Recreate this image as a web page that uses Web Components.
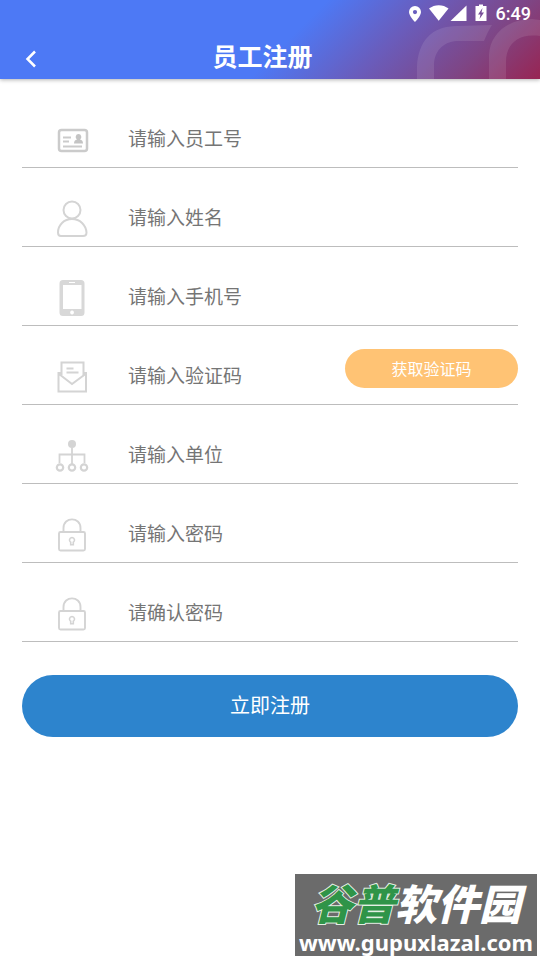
<!DOCTYPE html>
<html lang="zh-CN">
<head>
<meta charset="utf-8">
<meta name="viewport" content="width=device-width, initial-scale=1">
<title>员工注册</title>
<style>
html, body { margin: 0; min-height: 100%; }
body { background: #fff; font-family: "Liberation Sans", "Noto Sans CJK SC", sans-serif; }
</style>
</head>
<body>
<register-page></register-page>
<script>
const CJK = '"Noto Sans CJK SC", sans-serif';

class BaseElement extends HTMLElement {
  render(html) {
    this.attachShadow({ mode: 'open' }).innerHTML = html;
  }
}

customElements.define('status-bar', class extends BaseElement {
  connectedCallback() {
    this.render(`
      <style>
        :host { display: flex; justify-content: flex-end; align-items: center; height: 28px; padding-right: 9px; color: #fff; font: 500 18px/28px Roboto, sans-serif; }
        svg { display: block; width: 80px; height: 28px; margin-right: 7px; fill: #fff; }
      </style>
      <svg viewBox="0 0 80 28" aria-hidden="true">
        <path fill-rule="evenodd" d="M6 6a6 6 0 0 0-6 6c0 4 6 10 6 10s6-6 6-10a6 6 0 0 0-6-6zm0 4a2.100 2.100 0 1 1 0 4.200a2.100 2.100 0 0 1 0-4.200z"/>
        <path d="M20 8.500C25.500 4 34 4 39.500 8.500L29.700 20.800z"/>
        <path d="M57.500 5.500V21H41.500z"/>
        <path fill-rule="evenodd" d="M70 4.500h4v1.500h3.500v15h-11V6H70zM73.500 8l-4.500 6.500h2.500L70.500 19l4.500-6.500h-2.500z"/>
      </svg>
      <span>6:49</span>`);
  }
});

customElements.define('app-header', class extends BaseElement {
  connectedCallback() {
    this.render(`
      <style>
        :host { display: block; position: relative; overflow: hidden; color: #fff;
          background: linear-gradient(135deg, #4d79f5 0%, #4d79f5 53%, #6a5cbb 70%, #7f4584 86%, #982553 100%); }
        .art { position: absolute; right: 0; bottom: 0; width: 130px; height: 79px; fill: #fff; fill-opacity: .1; }
        .bar { position: relative; display: grid; grid-template-columns: 61px 1fr 76px; align-items: center; height: 49px; padding-top: 2px; }
        button { display: block; height: 40px; padding: 0 0 0 24px; border: 0; background: none; color: inherit; }
        button svg { display: block; width: 14px; height: 18px; margin-top: 8px; fill: none; stroke: #fff; stroke-width: 2.500; }
        h1 { margin: 0; font: 700 25px/36px ${CJK}; text-align: center; }
      </style>
      <svg class="art" viewBox="0 0 130 79" aria-hidden="true">
        <path d="M7 79V67C8 41 22 26 47 26L82 25Q78 31 74 41H47C32 42 24 52 24 66V79z"/>
        <path d="M79 79V55C80 33 99 19 122 19L130 20V36C108 33 96 44 96 62V79z"/>
      </svg>
      <status-bar></status-bar>
      <div class="bar">
        <button type="button" aria-label="返回"><svg viewBox="0 0 14 18"><path d="M11 1.500L3.500 9L11 16.500"/></svg></button>
        <h1><slot></slot></h1>
      </div>`);
  }
});

const ICONS = {
  card: `<g stroke="#cbcbcb"><rect x="5" y="10" width="28" height="21" rx="2.500" stroke-width="2.500"/><path stroke-width="2" d="M9 17.500h8M9 21.500h6M9 26.500h19"/><path fill="#c4c4c4" stroke="none" d="M24.500 14a3 3 0 0 1 1.500 5.500q3 .5 3 4h-9q0-3.500 3-4a3 3 0 0 1 1.500-5.500z"/></g>`,
  user: `<g stroke-width="2"><circle cx="18" cy="11" r="8.500"/><path d="M18 20C10 20 4 26 4 33.500Q4 37 7 37H29Q32.500 37 32.500 33.500C32 26 26 20 18 20z"/></g>`,
  phone: `<path fill="#d8d8d8" fill-rule="evenodd" stroke="none" d="M9 2H27Q30.500 2 30.500 5.500V34.500Q30.500 38 27 38H9Q5.500 38 5.500 34.500V5.500Q5.500 2 9 2zM9 7V31H27.500V7zM15 4v1h6V4zM18 32.600a1.900 1.900 0 1 0 .1 0z"/>`,
  mail: `<g stroke-width="2"><path d="M7.500 18V5.500H29.500V18M12.500 11.500h7M12.500 15.500h12"/><path d="M7 16H4.500V34.500H32V16H29.500M5 17L18 27L31.500 17"/></g>`,
  unit: `<circle cx="18" cy="8" r="4" fill="#d4d4d4" stroke="none"/><path stroke-width="1.800" d="M18 12V28M5.500 27V18.500H30.500V27"/><g stroke-width="2.200" fill="#fff"><circle cx="6" cy="31.500" r="3.200"/><circle cx="18" cy="31.500" r="3.200"/><circle cx="30" cy="31.500" r="3.200"/></g>`,
  lock: `<g stroke-width="1.900"><rect x="5" y="17" width="26" height="18.500" rx="1.500"/><path d="M9.500 17V13C9.500 1.500 26.500 1.500 26.500 13V17"/></g><path stroke-width="1.600" d="M18 22.500a2.600 2.600 0 0 1 1.300 4.800v2.500h-2.600v-2.500a2.600 2.600 0 0 1 1.300-4.800z"/>`
};

customElements.define('form-field', class extends BaseElement {
  connectedCallback() {
    const text = this.getAttribute('placeholder');
    this.render(`
      <style>
        :host { display: flex; align-items: center; box-sizing: border-box; height: 79px; padding-top: 23px; border-bottom: 1px solid #bdbdbd; }
        label { flex: none; padding: 0 38px 0 32px; }
        svg { display: block; width: 36px; height: 40px; fill: none; stroke: #d4d4d4; }
        input { flex: 1; min-width: 0; height: 40px; margin: 0 0 4px; padding: 0; border: 0; outline: 0; background: none; color: #333; font: 400 19px/28px ${CJK}; }
        input::placeholder { color: #757575; opacity: 1; }
        ::slotted(*) { align-self: flex-start; }
      </style>
      <label for="f" aria-label="${text}"><svg viewBox="0 0 36 40" aria-hidden="true">${ICONS[this.getAttribute('icon')]}</svg></label>
      <input id="f" type="${this.getAttribute('type') || 'text'}" placeholder="${text}">
      <slot></slot>`);
  }
});

customElements.define('pill-button', class extends BaseElement {
  connectedCallback() {
    this.render(`
      <style>
        :host { display: block; }
        button { display: block; width: 100%; height: 62px; padding: 0 0 2px; border: 0; border-radius: 31px; background: #2d84cd; color: #fff; font: 400 20px/28px ${CJK}; }
        :host([small]) { flex: none; width: 173px; }
        :host([small]) button { height: 39px; border-radius: 20px; background: #ffc374; font-size: 16px; }
      </style>
      <button type="button"><slot></slot></button>`);
  }
});

customElements.define('site-mark', class extends BaseElement {
  connectedCallback() {
    this.render(`
      <style>
        :host { display: block; box-sizing: border-box; width: 242px; height: 82px; background: #6b6b6b; color: #fff; text-align: center; white-space: nowrap; }
        .name { font: italic 900 42px/56px ${CJK}; }
        .green { color: #2f9448; -webkit-text-stroke: 2px #e4efe4; paint-order: stroke fill; }
        .url { font: 700 22px/24px "Noto Sans", sans-serif; }
      </style>
      <div class="name"><span class="green">谷普</span>软件园</div>
      <div class="url">www.gupuxlazal.com</div>`);
  }
});

customElements.define('register-page', class extends BaseElement {
  connectedCallback() {
    this.render(`
      <style>
        :host { display: block; position: relative; min-height: 100vh; }
        app-header { box-shadow: 0 1px 4px rgba(0, 0, 0, .3); }
        form { padding: 10px 22px 24px; }
        form > pill-button { margin-top: 33px; }
        site-mark { position: absolute; right: 3px; bottom: 4px; }
      </style>
      <app-header>员工注册</app-header>
      <form>
        <form-field icon="card" placeholder="请输入员工号"></form-field>
        <form-field icon="user" placeholder="请输入姓名"></form-field>
        <form-field icon="phone" type="tel" placeholder="请输入手机号"></form-field>
        <form-field icon="mail" placeholder="请输入验证码"><pill-button small>获取验证码</pill-button></form-field>
        <form-field icon="unit" placeholder="请输入单位"></form-field>
        <form-field icon="lock" type="password" placeholder="请输入密码"></form-field>
        <form-field icon="lock" type="password" placeholder="请确认密码"></form-field>
        <pill-button>立即注册</pill-button>
      </form>
      <site-mark></site-mark>`);
  }
});
</script>
</body>
</html>
